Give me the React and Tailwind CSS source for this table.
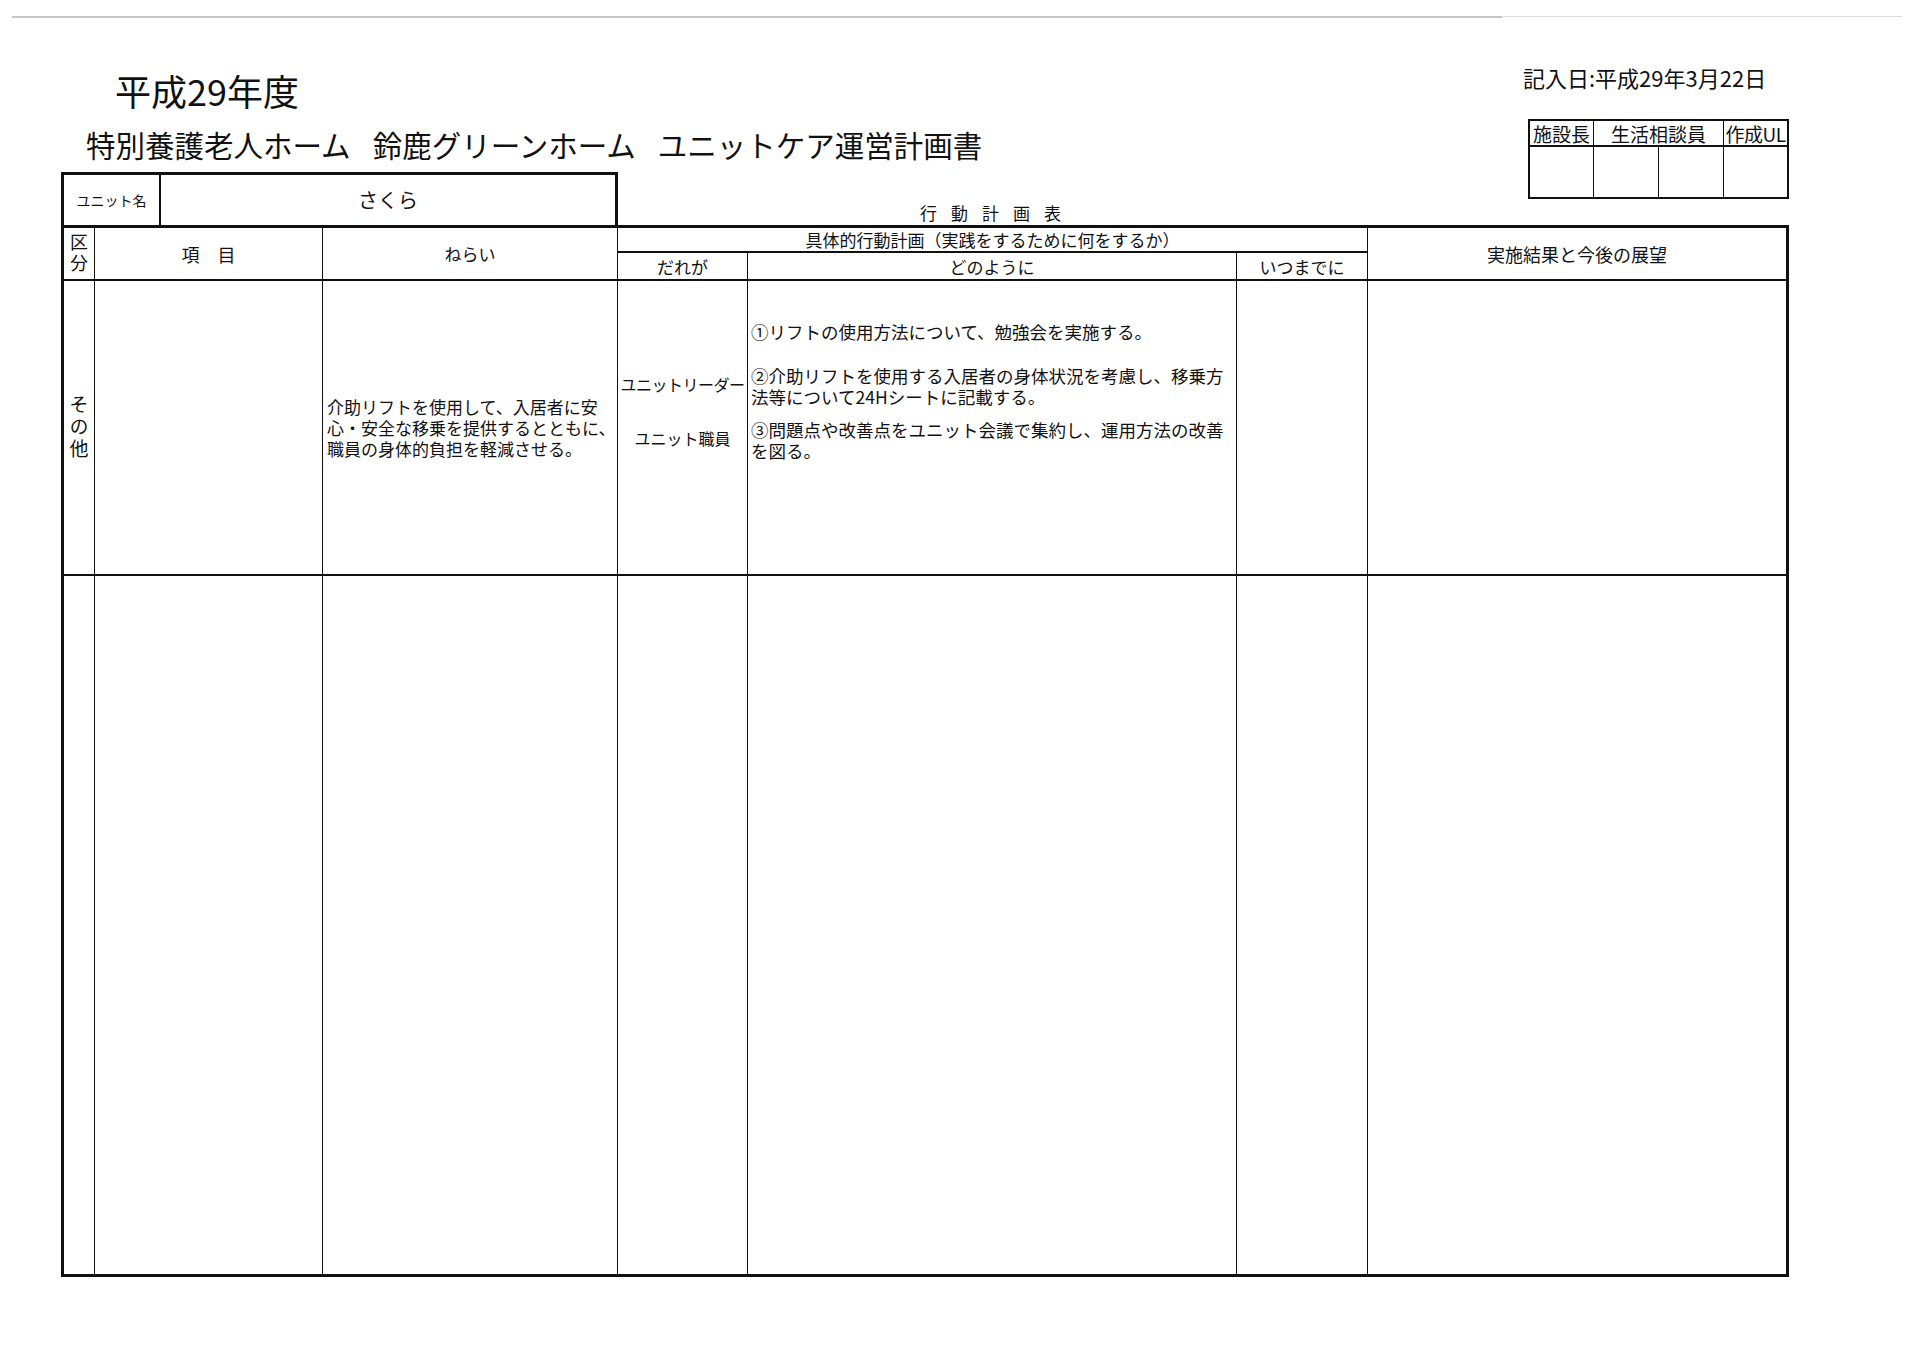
const L = "border-[#111]";

export default function App() {
  return (
    <div className="w-[1920px] h-[1358px] bg-white text-[#111] font-['Noto_Sans_CJK_JP','Noto_Sans',sans-serif] overflow-hidden">
      <div className="pt-[16px] pl-[12px] flex items-start">
        <div className="h-[2px] w-[1490px] bg-[#c6c6c6]" />
        <div className="h-[1px] w-[400px] bg-[#dddddd]" />
      </div>
      <div className="pl-[61px] pr-[131px]">
        {/* header section */}
        <div className="flex h-[207px]">
          <div className="w-[557px] shrink-0 flex flex-col">
            <div className="mt-[54px] ml-[54px] text-[36px] leading-[36px] whitespace-nowrap">平成29年度</div>
            <div className="mt-[21px] ml-[25px] text-[29.5px] leading-[30px] whitespace-nowrap flex">
              <span>特別養護老人ホーム</span>
              <span className="ml-[22px]">鈴鹿グリーンホーム</span>
              <span className="ml-[22px]">ユニットケア運営計画書</span>
            </div>
            <div className={`mt-auto h-[53px] flex border-t-[3px] border-l-[3px] border-r-[3px] ${L}`}>
              <div className={`w-[97px] shrink-0 border-r-2 ${L} flex items-center justify-center text-[14px] leading-none`}>ユニット名</div>
              <div className="flex-1 flex items-center justify-center text-[20px] leading-none">さくら</div>
            </div>
          </div>
          <div className="flex-1 flex items-end pl-[302px] pb-[4px]">
            <div className="text-[17px] leading-[17px] tracking-[14px] whitespace-nowrap">行動計画表</div>
          </div>
          <div className="w-[261px] shrink-0 flex flex-col">
            <div className="mt-[48px] -ml-[5px] text-[22px] leading-[22px] whitespace-nowrap">記入日:平成29年3月22日</div>
            <div className={`mt-[31px] h-[80px] border-2 ${L} flex flex-col`}>
              <div className={`h-[26px] shrink-0 flex border-b-2 ${L} text-[19px] leading-none whitespace-nowrap`}>
                <div className={`w-[64px] shrink-0 border-r ${L} flex items-center justify-center`}>施設長</div>
                <div className={`w-[130px] shrink-0 border-r ${L} flex items-center justify-center`}>生活相談員</div>
                <div className="flex-1 flex items-center justify-center tracking-[-0.5px]">作成UL</div>
              </div>
              <div className="flex-1 flex">
                <div className={`w-[64px] shrink-0 border-r ${L}`} />
                <div className={`w-[65px] shrink-0 border-r ${L}`} />
                <div className={`w-[65px] shrink-0 border-r ${L}`} />
                <div className="flex-1" />
              </div>
            </div>
          </div>
        </div>

        {/* main table */}
        <div className={`h-[1052px] border-[3px] ${L} flex flex-col`}>
          <div className={`h-[53px] shrink-0 flex border-b-2 ${L} text-[17px] leading-none whitespace-nowrap`}>
            <div className={`w-[31px] shrink-0 border-r ${L} flex items-center justify-center`}>
              <span className="[writing-mode:vertical-rl] [text-orientation:upright] text-[18px] leading-[18px] tracking-[3px]">区分</span>
            </div>
            <div className={`w-[228px] shrink-0 border-r ${L} flex items-center justify-center text-[18px]`}>項　目</div>
            <div className={`w-[295px] shrink-0 border-r ${L} flex items-center justify-center`}>ねらい</div>
            <div className={`w-[750px] shrink-0 border-r ${L} flex flex-col`}>
              <div className={`h-[25px] shrink-0 border-b-2 ${L} flex items-center justify-center`}>具体的行動計画（実践をするために何をするか）</div>
              <div className="flex-1 flex">
                <div className={`w-[130px] shrink-0 border-r ${L} flex items-center justify-center`}>だれが</div>
                <div className={`w-[489px] shrink-0 border-r ${L} flex items-center justify-center`}>どのように</div>
                <div className="flex-1 flex items-center justify-center">いつまでに</div>
              </div>
            </div>
            <div className="flex-1 flex items-center justify-center text-[18px]">実施結果と今後の展望</div>
          </div>

          <div className={`h-[295px] shrink-0 flex border-b-2 ${L}`}>
            <div className={`w-[31px] shrink-0 border-r ${L} flex items-center justify-center`}>
              <span className="[writing-mode:vertical-rl] [text-orientation:upright] text-[19px] leading-[19px] tracking-[3px]">その他</span>
            </div>
            <div className={`w-[228px] shrink-0 border-r ${L}`} />
            <div className={`w-[295px] shrink-0 border-r ${L} flex items-center pl-[4px] text-[17px] leading-[21px] whitespace-nowrap`}>
              <div>
                介助リフトを使用して、入居者に安<br />
                心・安全な移乗を提供するとともに、<br />
                職員の身体的負担を軽減させる。
              </div>
            </div>
            <div className={`w-[130px] shrink-0 border-r ${L} flex flex-col items-center pt-[93px] text-[16px] leading-[20px] whitespace-nowrap`}>
              <div className="tracking-[-0.5px]">ユニットリーダー</div>
              <div className="mt-[34px]">ユニット職員</div>
            </div>
            <div className={`w-[489px] shrink-0 border-r ${L} pt-[40px] pl-[3px] text-[17.5px] leading-[21px] whitespace-nowrap`}>
              <div>①リフトの使用方法について、勉強会を実施する。</div>
              <div className="mt-[23px]">
                ②介助リフトを使用する入居者の身体状況を考慮し、移乗方<br />
                法等について24Hシートに記載する。
              </div>
              <div className="mt-[12px]">
                ③問題点や改善点をユニット会議で集約し、運用方法の改善<br />
                を図る。
              </div>
            </div>
            <div className={`w-[131px] shrink-0 border-r ${L}`} />
            <div className="flex-1" />
          </div>

          <div className="flex-1 flex">
            <div className={`w-[31px] shrink-0 border-r ${L}`} />
            <div className={`w-[228px] shrink-0 border-r ${L}`} />
            <div className={`w-[295px] shrink-0 border-r ${L}`} />
            <div className={`w-[130px] shrink-0 border-r ${L}`} />
            <div className={`w-[489px] shrink-0 border-r ${L}`} />
            <div className={`w-[131px] shrink-0 border-r ${L}`} />
            <div className="flex-1" />
          </div>
        </div>
      </div>
    </div>
  );
}
